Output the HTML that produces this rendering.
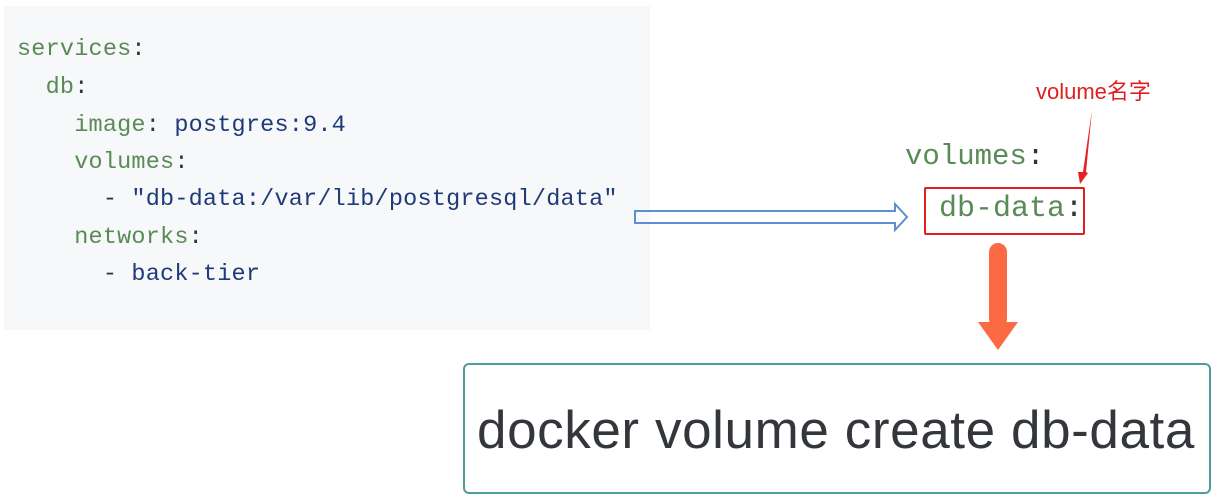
<!DOCTYPE html>
<html><head><style>
body{margin:0;width:1214px;height:497px;background:#fff;position:relative;overflow:hidden;font-family:"Liberation Sans",sans-serif}
.code{position:absolute;left:4px;top:6px;width:646px;height:324px;background:#f6f8fa}
.l{position:absolute;font-family:"Liberation Mono",monospace;font-size:23.5px;letter-spacing:0.2px;white-space:pre;color:#333}
.k{color:#5a8a55}.v{color:#1f3a78}
.box{position:absolute;left:463px;top:363px;width:744px;height:127px;border:2px solid #4e9c9c;border-radius:6px}
.box span{position:absolute;left:12px;top:35px;font-size:53px;letter-spacing:0.6px;color:#33363a;white-space:nowrap}
</style></head><body>
<div class="code"></div>
<div class="l" style="left:17px;top:36px"><span class="k">services</span>:</div>
<div class="l" style="left:17px;top:74px">  <span class="k">db</span>:</div>
<div class="l" style="left:17px;top:112px">    <span class="k">image</span>: <span class="v">postgres:9.4</span></div>
<div class="l" style="left:17px;top:149px">    <span class="k">volumes</span>:</div>
<div class="l" style="left:17px;top:186px">      - <span class="v">"db-data:/var/lib/postgresql/data"</span></div>
<div class="l" style="left:17px;top:224px">    <span class="k">networks</span>:</div>
<div class="l" style="left:17px;top:261px">      - <span class="v">back-tier</span></div>
<div class="l" style="left:905px;top:140px;font-size:29px;letter-spacing:0"><span class="k">volumes</span>:</div>
<div style="position:absolute;left:924px;top:187px;width:157px;height:44px;border:2px solid #e02020;border-radius:2px"></div>
<div class="l" style="left:939px;top:192px;font-size:30px;letter-spacing:0"><span class="k">db-data</span>:</div>
<div style="position:absolute;left:1036px;top:74px;color:#e02020;font-size:22px;font-family:'Liberation Sans','Noto Sans CJK SC',sans-serif">volume名字</div>
<svg width="1214" height="497" style="position:absolute;left:0;top:0">
<path d="M635 211 H895 V204 L907 217 L895 230 V223 H635 Z" fill="none" stroke="#5b8fcf" stroke-width="2"/>
<path d="M1092 110 L1083 172 L1078 172 L1080 184 L1088 173 L1086 172 Z" fill="#e42222"/>
<rect x="989" y="243" width="18" height="85" rx="9" fill="#fb6a42"/>
<path d="M978 322 H1018 L998 350 Z" fill="#fb6a42"/>
</svg>
<div class="box"><span>docker volume create db-data</span></div>
</body></html>
